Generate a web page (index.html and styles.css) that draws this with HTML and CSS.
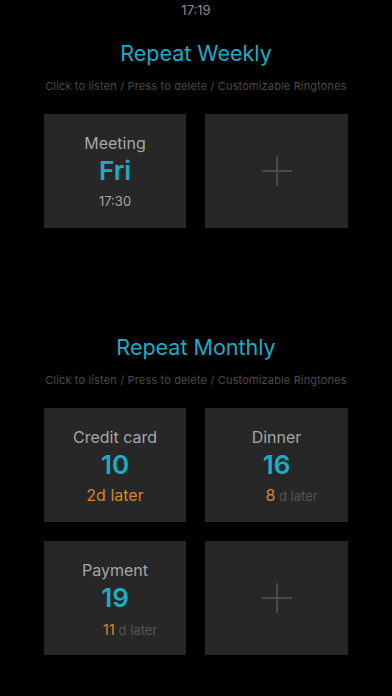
FILE: index.html
```html
<!DOCTYPE html>
<html lang="en">
<head>
    <meta charset="UTF-8">
    <meta name="viewport" content="width=device-width, initial-scale=1.0">
    <title>Repeat Reminders</title>
    <link rel="stylesheet" href="styles.css">
</head>
<body>
    <div class="status">17:19</div>

    <!-- Weekly -->
    <h2 class="section-title">Repeat Weekly</h2>
    <p class="hint">Click to listen / Press to delete / Customizable Ringtones</p>
    <div class="grid">
        <div class="card">
            <div class="card-label">Meeting</div>
            <div class="card-value">Fri</div>
            <div class="card-sub">17:30</div>
        </div>
        <div class="card add">
            <svg width="32" height="32" viewBox="0 0 32 32"><path d="M16 1V31M1 16H31" stroke="#4a4a4a" stroke-width="2"/></svg>
        </div>
    </div>

    <!-- Monthly -->
    <h2 class="section-title monthly">Repeat Monthly</h2>
    <p class="hint">Click to listen / Press to delete / Customizable Ringtones</p>
    <div class="grid">
        <div class="card">
            <div class="card-label">Credit card</div>
            <div class="card-value">10</div>
            <div class="card-sub later">2d later</div>
        </div>
        <div class="card">
            <div class="card-label">Dinner</div>
            <div class="card-value">16</div>
            <div class="card-sub shifted"><span class="days">8</span> <span class="dim">d later</span></div>
        </div>
        <div class="card">
            <div class="card-label">Payment</div>
            <div class="card-value">19</div>
            <div class="card-sub shifted small"><span class="days">11</span> <span class="dim">d later</span></div>
        </div>
        <div class="card add">
            <svg width="32" height="32" viewBox="0 0 32 32"><path d="M16 1V31M1 16H31" stroke="#4a4a4a" stroke-width="2"/></svg>
        </div>
    </div>
</body>
</html>
```

FILE: styles.css
```css
body {
    margin: 0;
    background: #000;
    font-family: Inter, Roboto, sans-serif;
    text-align: center;
    width: 392px;
    height: 696px;
    overflow: hidden;
}
.status {
    height: 20px;
    line-height: 20px;
    font-size: 13px;
    color: #8a8a8a;
}
.section-title {
    margin: 19px 0 0;
    height: 28px;
    line-height: 28px;
    font-size: 21.5px;
    font-weight: 400;
    color: #1fabc5;
}
.section-title.monthly {
    margin-top: 105px;
}
.hint {
    margin: 12px 0 0;
    line-height: 14px;
    font-size: 11px;
    letter-spacing: 0.15px;
    color: #4a4a4a;
}
.grid {
    display: grid;
    grid-template-columns: 142px 143px;
    gap: 19px;
    justify-content: center;
    margin-top: 21px;
}
.card {
    height: 114px;
    background: #272727;
    box-sizing: border-box;
    padding-top: 19px;
}
.card.add {
    padding: 0;
    display: flex;
    align-items: center;
    justify-content: center;
}
.card-label {
    line-height: 20px;
    font-size: 16px;
    color: #a6a6a6;
}
.card-value {
    margin-top: 3px;
    line-height: 30px;
    font-size: 26px;
    font-weight: 600;
    color: #1fabc5;
}
.card-sub {
    margin-top: 5px;
    line-height: 20px;
    font-size: 13px;
    color: #a6a6a6;
}
.card-sub.later {
    font-size: 16px;
    color: #d6842a;
}
.card-sub.shifted {
    padding-left: 30px;
}
.card-sub.small {
    margin-top: 7px;
}
.days {
    font-size: 16px;
    color: #d6842a;
}
.small .days {
    font-size: 15px;
}
.dim {
    font-size: 13px;
    color: #555;
}
```
